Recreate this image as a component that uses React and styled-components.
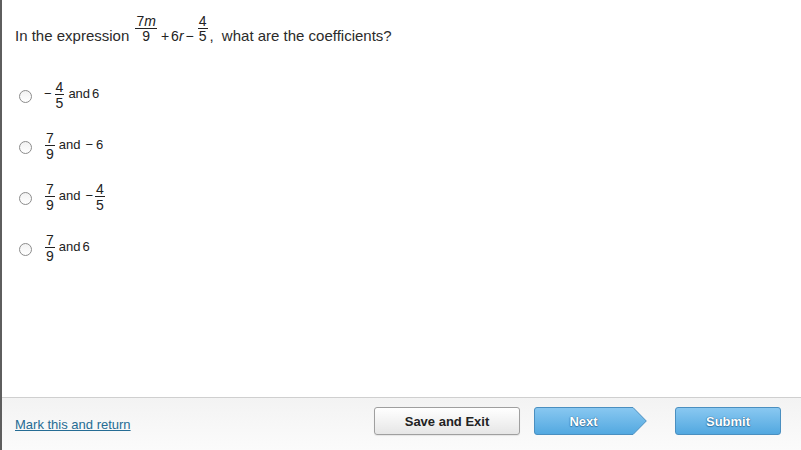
import React from 'react';
import styled, { createGlobalStyle } from 'styled-components';

const GlobalStyle = createGlobalStyle`
  html, body { margin: 0; padding: 0; background: #fff; }
  body { font-family: "Liberation Sans", Arial, sans-serif; }
  * { box-sizing: border-box; }
`;

const Page = styled.div`
  width: 801px;
  height: 450px;
  display: flex;
  flex-direction: column;
  border-left: 2px solid #5e5e5e;
  background: #fff;
  overflow: hidden;
`;

const Main = styled.main`
  flex: 1;
  padding: 14px 0 0 13px;
`;

const Question = styled.div`
  font-size: 15px;
  color: #2b2b2b;
  white-space: nowrap;
`;

const MathExpr = styled.span`
  font-family: "Liberation Sans", Arial, sans-serif;
  font-size: 14px;
  color: #222;
`;

const Trail = styled.span`
  margin-right: 4px;
`;

const Frac = styled.span`
  display: inline-flex;
  flex-direction: column;
  text-align: center;
  vertical-align: ${(p) => p.$shift}px;
  font-size: 14px;
  line-height: 1;
  margin: 0 2px;
`;

const Num = styled.span`
  display: block;
  padding: 0 1px;
  border-bottom: 1px solid #222;
`;

const Den = styled.span`
  display: block;
  padding: ${(p) => p.$gap || 0}px 1px 0;
`;

const Var = styled.i`
  font-style: italic;
`;

const Op = styled.span`
  margin: 0 ${(p) => p.$m ?? 1}px;
`;

const Word = styled.span`
  margin: 0 ${(p) => p.$right ?? 3}px 0 ${(p) => p.$left ?? 3}px;
`;

const Options = styled.div`
  margin-top: 36px;
  display: flex;
  flex-direction: column;
  gap: 21px;
`;

const OptionRow = styled.label`
  display: flex;
  align-items: center;
  height: 30px;
  cursor: pointer;
`;

const Radio = styled.span`
  width: 13px;
  height: 13px;
  margin: 2px 11px 0 4px;
  border-radius: 50%;
  border: 1px solid #8c8c8c;
  background: linear-gradient(#f2f2f2, #ffffff);
  flex: none;
`;

const OptionText = styled.span`
  font-size: 13px;
  color: #222;
  white-space: nowrap;
`;

const Footer = styled.footer`
  height: 53px;
  border-top: 1px solid #cfcfcf;
  background: linear-gradient(#f3f3f3, #fbfbfb);
  display: flex;
  align-items: flex-start;
  padding: 9px 20px 0 13px;
`;

const MarkLink = styled.a`
  margin-top: 10px;
  font-size: 13px;
  color: #256c94;
  text-decoration: underline;
  cursor: pointer;
`;

const ButtonGroup = styled.div`
  margin-left: auto;
  display: flex;
  align-items: center;
`;

const BaseButton = styled.button`
  height: 28px;
  font-family: "Liberation Sans", Arial, sans-serif;
  font-size: 13px;
  font-weight: bold;
  padding: 0;
  cursor: pointer;
`;

const SaveButton = styled(BaseButton)`
  width: 146px;
  border: 1px solid #9f9f9f;
  border-radius: 3px;
  background: linear-gradient(#ffffff, #e6e6e6);
  color: #222;
  box-shadow: 0 1px 1px rgba(0, 0, 0, 0.08);
`;

const blueText = `
  color: #fff;
  text-shadow: 0 0 1px #2a6a98, 0 0 1px #2a6a98, 0 1px 1px #3a7fb0;
`;

const NextButton = styled(BaseButton)`
  position: relative;
  width: 113px;
  margin-left: 14px;
  border: none;
  background: transparent;
  padding-right: 14px;
  ${blueText}
`;

const NextShape = styled.svg`
  position: absolute;
  left: 0;
  top: 0;
  z-index: 0;
`;

const NextLabel = styled.span`
  position: relative;
  z-index: 1;
`;

const SubmitButton = styled(BaseButton)`
  width: 106px;
  margin-left: 28px;
  border: 1px solid #4a8fc0;
  border-radius: 3px;
  background: linear-gradient(#89c8f1, #52a8e0);
  ${blueText}
`;

const Fraction = ({ n, d, shift, gap }) => (
  <Frac $shift={shift}>
    <Num>{n}</Num>
    <Den $gap={gap}>{d}</Den>
  </Frac>
);

const OptFrac = ({ n, d }) => <Fraction n={n} d={d} shift={6} gap={1} />;

const options = [
  (
    <>
      <Op $m={1}>−</Op>
      <OptFrac n="4" d="5" />
      <Word $left={2} $right={2}>and</Word>6
    </>
  ),
  (
    <>
      <OptFrac n="7" d="9" />
      <Word $left={2} $right={5}>and</Word>
      <Op $m={0}>−</Op>
      <Word $left={3} $right={0}>6</Word>
    </>
  ),
  (
    <>
      <OptFrac n="7" d="9" />
      <Word $left={2} $right={5}>and</Word>
      <Op $m={0}>−</Op>
      <OptFrac n="4" d="5" />
    </>
  ),
  (
    <>
      <OptFrac n="7" d="9" />
      <Word $left={2} $right={2}>and</Word>6
    </>
  ),
];

export default function App() {
  return (
    <>
      <GlobalStyle />
      <Page>
        <Main>
          <Question>
            In the expression{' '}
            <MathExpr>
              <Fraction
                n={<>7<Var>m</Var></>}
                d="9"
                shift={15}
                gap={0}
              />
              <Op $m={2}>+</Op>6<Var>r</Var>
              <Op $m={2}>−</Op>
              <Fraction n="4" d="5" shift={15} gap={0} />
            </MathExpr>
            <Trail>,</Trail> what are the coefficients?
          </Question>
          <Options>
            {options.map((content, i) => (
              <OptionRow key={i}>
                <Radio />
                <OptionText>{content}</OptionText>
              </OptionRow>
            ))}
          </Options>
        </Main>
        <Footer>
          <MarkLink>Mark this and return</MarkLink>
          <ButtonGroup>
            <SaveButton>Save and Exit</SaveButton>
            <NextButton>
              <NextShape width="113" height="28" viewBox="0 0 113 28">
                <defs>
                  <linearGradient id="nextGrad" x1="0" y1="0" x2="0" y2="1">
                    <stop offset="0" stopColor="#89c8f1" />
                    <stop offset="1" stopColor="#52a8e0" />
                  </linearGradient>
                </defs>
                <path
                  d="M3 0.5 H99 L112.3 14 L99 27.5 H3 Q0.5 27.5 0.5 25 V3 Q0.5 0.5 3 0.5 Z"
                  fill="url(#nextGrad)"
                  stroke="#4a8fc0"
                  strokeWidth="1"
                />
              </NextShape>
              <NextLabel>Next</NextLabel>
            </NextButton>
            <SubmitButton>Submit</SubmitButton>
          </ButtonGroup>
        </Footer>
      </Page>
    </>
  );
}
